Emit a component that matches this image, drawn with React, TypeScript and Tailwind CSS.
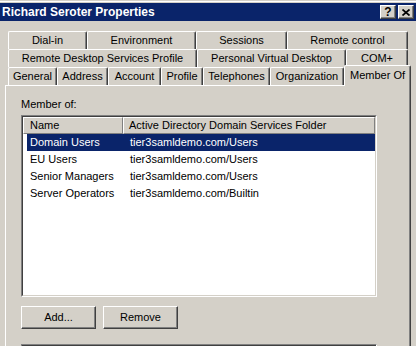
import { FC } from 'react';
import clsx from 'clsx';

const styles = {
  raised: 'border border-t-white border-l-white border-b-[#404040] border-r-[#404040] shadow-[inset_-1px_-1px_0_#808080]',
  tab: 'h-[18px] flex items-center justify-center whitespace-nowrap border-t border-l border-r border-t-white border-l-white border-r-[#404040] shadow-[inset_-1px_0_0_#808080] rounded-t-[2px]',
};

interface TabProps {
  label: string;
  width: string;
}

const Tab: FC<TabProps> = ({ label, width }) => (
  <div className={clsx(styles.tab, width)}>{label}</div>
);

const members = [
  { name: 'Domain Users', folder: 'tier3samldemo.com/Users' },
  { name: 'EU Users', folder: 'tier3samldemo.com/Users' },
  { name: 'Senior Managers', folder: 'tier3samldemo.com/Users' },
  { name: 'Server Operators', folder: 'tier3samldemo.com/Builtin' },
];

export default function App() {
  return (
    <div className="w-[416px] h-[346px] overflow-hidden bg-[#d4d0c8] flex flex-col text-[11px] leading-[13px] text-black font-['Liberation_Sans',Arial,sans-serif]">
      {/* window frame */}
      <div className="shrink-0 h-[3px] pt-px">
        <div className="h-px bg-white" />
      </div>

      {/* caption */}
      <div className="shrink-0 h-[18px] bg-[#0a246a] flex items-center justify-between pl-[2px] pr-[2px]">
        <span className="text-white font-bold text-[12px] leading-[14px]">Richard Seroter Properties</span>
        <div className="flex gap-[2px]">
          <div className={clsx(styles.raised, 'w-[16px] h-[14px] bg-[#d4d0c8] flex items-center justify-center')}>
            <span className="font-bold text-[12px] leading-[12px]">?</span>
          </div>
          <div className={clsx(styles.raised, 'w-[16px] h-[14px] bg-[#d4d0c8] flex items-center justify-center')}>
            <svg width="8" height="7" viewBox="0 0 8 7">
              <path d="M0.5 0.5 L7.5 6.5 M7.5 0.5 L0.5 6.5" stroke="#000" strokeWidth="1.7" />
            </svg>
          </div>
        </div>
      </div>

      {/* tabs */}
      <div className="shrink-0 mt-[10px] pl-[8px]">
        <div className="flex">
          <Tab label="Dial-in" width="w-[79px]" />
          <Tab label="Environment" width="w-[109px]" />
          <Tab label="Sessions" width="w-[91px]" />
          <Tab label="Remote control" width="w-[121px]" />
        </div>
        <div className="flex">
          <Tab label="Remote Desktop Services Profile" width="w-[189px]" />
          <Tab label="Personal Virtual Desktop" width="w-[149px]" />
          <Tab label="COM+" width="w-[62px]" />
        </div>
        <div className="flex items-start h-[18px]">
          <Tab label="General" width="w-[49px]" />
          <Tab label="Address" width="w-[51px]" />
          <Tab label="Account" width="w-[53px]" />
          <Tab label="Profile" width="w-[42px]" />
          <Tab label="Telephones" width="w-[67px]" />
          <Tab label="Organization" width="w-[74px]" />
          <div className="relative z-10 -mt-[2px] w-[67px] h-[21px] bg-[#d4d0c8] flex justify-center pt-[3px] border-t border-l border-r border-t-white border-l-white border-r-[#404040] shadow-[inset_-1px_0_0_#808080] rounded-t-[2px]">
            Member Of
          </div>
        </div>
      </div>

      {/* page */}
      <div className="ml-[5px] w-[406px] flex-1 min-h-0 overflow-hidden border-t border-l border-r border-t-white border-l-white border-r-[#404040] shadow-[inset_-1px_0_0_#808080] pl-[15px] pt-[12px]">
        <div>Member of:</div>

        <div className="mt-[4px] w-[356px] h-[182px] border border-t-[#808080] border-l-[#808080] border-b-white border-r-white">
          <div className="h-full border border-t-[#404040] border-l-[#404040] border-b-[#d4d0c8] border-r-[#d4d0c8] bg-white">
            <div className="flex h-[17px]">
              <div className="w-[100px] border-t border-l border-b border-r border-t-white border-l-white border-b-[#808080] border-r-[#808080] bg-[#d4d0c8] pl-[6px] flex items-center">
                Name
              </div>
              <div className="flex-1 border-t border-l border-b border-r border-t-white border-l-white border-b-[#808080] border-r-[#808080] bg-[#d4d0c8] pl-[5px] flex items-center">
                Active Directory Domain Services Folder
              </div>
            </div>
            {members.map((m, i) => (
              <div
                key={m.name}
                className={clsx('ml-[4px] h-[17px] flex items-center', i === 0 ? 'bg-[#0a246a] text-white' : 'text-black')}
              >
                <span className="w-[96px] pl-[3px] whitespace-nowrap">{m.name}</span>
                <span className="pl-[7px] whitespace-nowrap">{m.folder}</span>
              </div>
            ))}
          </div>
        </div>

        <div className="mt-[9px] flex gap-[7px]">
          <button type="button" className={clsx(styles.raised, 'w-[75px] h-[23px] bg-[#d4d0c8] flex items-center justify-center')}>
            Add...
          </button>
          <button type="button" className={clsx(styles.raised, 'w-[75px] h-[23px] bg-[#d4d0c8] flex items-center justify-center')}>
            Remove
          </button>
        </div>

        <div className="mt-[15px] w-[356px] h-[20px] border-t border-l border-r border-t-[#808080] border-l-[#808080] border-r-white">
          <div className="h-full border-t border-l border-t-[#404040] border-l-[#404040]" />
        </div>
      </div>
    </div>
  );
}
